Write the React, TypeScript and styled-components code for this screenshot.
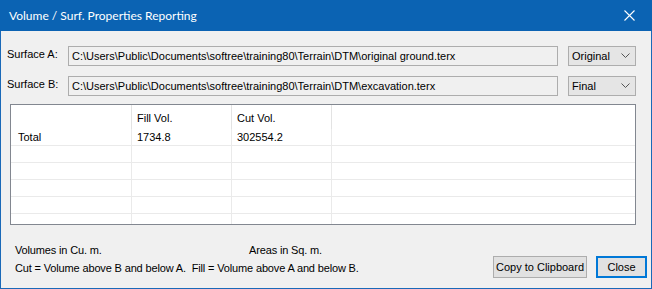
import styled, { createGlobalStyle } from 'styled-components';

const GlobalStyle = createGlobalStyle`
  html, body {
    margin: 0;
    padding: 0;
    background: #f0f0f0;
  }
  body {
    font-family: "Liberation Sans", Arial, sans-serif;
    font-size: 11px;
    color: #000;
  }
`;

const Window = styled.div`
  width: 652px;
  height: 289px;
  box-sizing: border-box;
  border: 1px solid #1a69b8;
  border-top: none;
  display: flex;
  flex-direction: column;
  background: #f0f0f0;
`;

const TitleBar = styled.div`
  height: 31px;
  margin: 0 -1px;
  background: #0b63b3;
  color: #fff;
  display: flex;
  align-items: center;
  justify-content: space-between;
  padding-left: 9px;
  font-family: "Segoe UI", Lato, "Noto Sans", sans-serif;
  font-size: 12px;
`;

const CloseGlyph = styled.div`
  width: 46px;
  height: 31px;
  display: flex;
  align-items: center;
  justify-content: center;
`;

const Body = styled.div`
  flex: 1;
  display: flex;
  flex-direction: column;
  padding: 14px 4px 0 6px;
`;

const SurfaceRow = styled.div`
  display: flex;
  align-items: center;
  height: 21px;
  margin-bottom: 9px;

  & + & {
    margin-bottom: 8px;
  }
`;

const Label = styled.div`
  width: 61px;
  padding-bottom: 4px;
`;

const PathBox = styled.div`
  width: 490px;
  height: 20px;
  box-sizing: border-box;
  border: 1px solid #adadad;
  background: #f0f0f0;
  padding-left: 3px;
  display: flex;
  align-items: center;
  white-space: nowrap;
  overflow: hidden;
`;

const Combo = styled.div`
  margin-left: 10px;
  width: 68px;
  height: 20px;
  box-sizing: border-box;
  border: 1px solid #adadad;
  background: #e5e5e5;
  display: flex;
  align-items: center;
  justify-content: space-between;
  padding: 0 5px 0 3px;
`;

const GridBox = styled.div`
  margin: 0 0 0 3px;
  width: 626px;
  height: 121px;
  box-sizing: border-box;
  border: 1px solid #828790;
  background: #fff;
  overflow: hidden;
  display: flex;
  flex-direction: column;
`;

const GridRow = styled.div<{ $header?: boolean }>`
  display: flex;
  flex-shrink: 0;
  height: ${(p) => (p.$header ? 24 : 17)}px;
  box-sizing: border-box;
  border-bottom: ${(p) => (p.$header ? 'none' : '1px solid #eaeaea')};
`;

const Cell = styled.div<{ $w?: number; $header?: boolean }>`
  width: ${(p) => (p.$w ? `${p.$w}px` : 'auto')};
  flex: ${(p) => (p.$w ? 'none' : '1')};
  box-sizing: border-box;
  border-right: ${(p) => (p.$w ? `1px solid ${p.$header ? '#e3e3e3' : '#eaeaea'}` : 'none')};
  padding-left: ${(p) => (p.$w === 121 ? 7 : 5)}px;
  display: flex;
  align-items: center;
  padding-top: ${(p) => (p.$header ? 2 : 0)}px;
`;

const Footer = styled.div`
  display: flex;
  align-items: flex-end;
  margin-top: 19px;
  padding-left: 8px;
`;

const Notes = styled.div`
  flex: 1;
  display: flex;
  flex-direction: column;
  gap: 6px;
  padding-bottom: 4px;
  letter-spacing: -0.15px;
`;

const NoteLine = styled.div`
  display: flex;
`;

const NoteCol = styled.div`
  width: 234px;
`;

const Buttons = styled.div`
  display: flex;
  gap: 9px;
`;

const Button = styled.div<{ $default?: boolean }>`
  height: 22px;
  box-sizing: border-box;
  border: ${(p) => (p.$default ? '2px solid #0078d7' : '1px solid #adadad')};
  background: #e1e1e1;
  display: flex;
  align-items: center;
  justify-content: center;
  width: ${(p) => (p.$default ? 51 : 94)}px;
`;

const columns = [121, 100, 100];

const Chevron = () => (
  <svg width="9" height="5" viewBox="0 0 9 5">
    <path d="M0.5 0.5 L4.5 4.5 L8.5 0.5" fill="none" stroke="#555" strokeWidth="1" />
  </svg>
);

export default function App() {
  const rows = [['Total', '1734.8', '302554.2'], [], [], [], [], [], []];
  return (
    <>
      <GlobalStyle />
      <Window>
        <TitleBar>
          <span>Volume / Surf. Properties Reporting</span>
          <CloseGlyph>
            <svg width="11" height="11" viewBox="0 0 11 11">
              <path d="M0.5 0.5 L10.5 10.5 M10.5 0.5 L0.5 10.5" stroke="#fff" strokeWidth="1.1" />
            </svg>
          </CloseGlyph>
        </TitleBar>
        <Body>
          <SurfaceRow>
            <Label>Surface A:</Label>
            <PathBox>C:\Users\Public\Documents\softree\training80\Terrain\DTM\original ground.terx</PathBox>
            <Combo>
              <span>Original</span>
              <Chevron />
            </Combo>
          </SurfaceRow>
          <SurfaceRow>
            <Label>Surface B:</Label>
            <PathBox>C:\Users\Public\Documents\softree\training80\Terrain\DTM\excavation.terx</PathBox>
            <Combo>
              <span>Final</span>
              <Chevron />
            </Combo>
          </SurfaceRow>
          <GridBox>
            <GridRow $header>
              <Cell $w={121} $header />
              <Cell $w={100} $header>Fill Vol.</Cell>
              <Cell $w={100} $header>Cut Vol.</Cell>
              <Cell />
            </GridRow>
            {rows.map((r, i) => (
              <GridRow key={i}>
                {columns.map((w, j) => (
                  <Cell key={j} $w={w}>{r[j] ?? ''}</Cell>
                ))}
                <Cell />
              </GridRow>
            ))}
          </GridBox>
          <Footer>
            <Notes>
              <NoteLine>
                <NoteCol>Volumes in Cu. m.</NoteCol>
                <span>Areas in Sq. m.</span>
              </NoteLine>
              <NoteLine>Cut = Volume above B and below A.&nbsp; Fill = Volume above A and below B.</NoteLine>
            </Notes>
            <Buttons>
              <Button>Copy to Clipboard</Button>
              <Button $default>Close</Button>
            </Buttons>
          </Footer>
        </Body>
      </Window>
    </>
  );
}
